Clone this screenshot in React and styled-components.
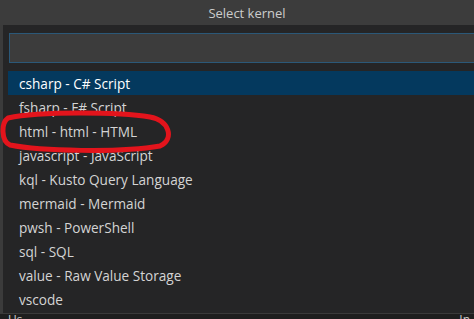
import styled, { createGlobalStyle } from 'styled-components';

const GlobalStyle = createGlobalStyle`
  html, body {
    margin: 0;
    padding: 0;
    background: #3a3a3a;
    overflow: hidden;
  }
  body {
    font-family: "Open Sans", "Noto Sans", sans-serif;
  }
`;

const StyledPage = styled.div`
  position: relative;
  width: 474px;
  height: 319px;
  display: flex;
  flex-direction: column;
  overflow: hidden;
`;

const StyledTitleBar = styled.div`
  height: 25px;
  flex: none;
  background-color: #3c3c3c;
  color: #cccccc;
  font-size: 13px;
  display: flex;
  align-items: center;
  justify-content: center;
  padding-left: 20px;
`;

const StyledBody = styled.div`
  flex: 1;
  display: flex;
  padding-left: 3px;
  background-color: #3b3b3b;
  min-height: 0;
`;

const StyledPanel = styled.div`
  flex: 1;
  background-color: #252526;
  padding: 8px 0 0 6px;
  display: flex;
  flex-direction: column;
  gap: 8px;
`;

const StyledInput = styled.div`
  height: 28px;
  flex: none;
  margin-right: -4px;
  background-color: #3c3c3c;
  border: 1px solid #2b5878;
  border-right: none;
`;

const StyledList = styled.ul`
  list-style: none;
  margin: 0 -4px 0 -1px;
  padding: 0;
`;

const StyledRow = styled.li`
  height: 24px;
  display: flex;
  align-items: center;
  padding-left: 11px;
  font-size: 13.6px;
  color: ${({ $selected }) => ($selected ? '#ffffff' : '#d4d4d4')};
  background-color: ${({ $selected }) => ($selected ? '#04395e' : 'transparent')};
`;

const StyledStatusBar = styled.div`
  height: 5px;
  flex: none;
  background-color: #1e1e1e;
  border-top: 1px solid #3a3a3a;
  display: flex;
  justify-content: space-between;
  padding: 0 4px 0 8px;
  font-size: 12px;
  line-height: 12px;
  color: #cccccc;
  overflow: hidden;
`;

const StyledMark = styled.svg`
  position: absolute;
  left: 0;
  top: 0;
  pointer-events: none;
`;

const kernels = [
  'csharp - C# Script',
  'fsharp - F# Script',
  'html - html - HTML',
  'javascript - JavaScript',
  'kql - Kusto Query Language',
  'mermaid - Mermaid',
  'pwsh - PowerShell',
  'sql - SQL',
  'value - Raw Value Storage',
  'vscode',
];

export default function App() {
  return (
    <>
      <GlobalStyle />
      <StyledPage>
        <StyledTitleBar>Select kernel</StyledTitleBar>
        <StyledBody>
          <StyledPanel>
            <StyledInput />
            <StyledList>
              {kernels.map((k, i) => (
                <StyledRow key={k} $selected={i === 0}>
                  {k}
                </StyledRow>
              ))}
            </StyledList>
          </StyledPanel>
        </StyledBody>
        <StyledStatusBar>
          <span>Us</span>
          <span>In</span>
        </StyledStatusBar>
        <StyledMark width="474" height="319" viewBox="0 0 474 319">
          <path
            d="M 8 118 C 40 111, 120 112, 150 117 C 169 120, 175 139, 160 146 C 120 153, 40 151, 10 145 C 1 141, 1 123, 8 118 Z"
            fill="none"
            stroke="#e3141c"
            strokeWidth="5"
            strokeLinecap="round"
          />
        </StyledMark>
      </StyledPage>
    </>
  );
}
